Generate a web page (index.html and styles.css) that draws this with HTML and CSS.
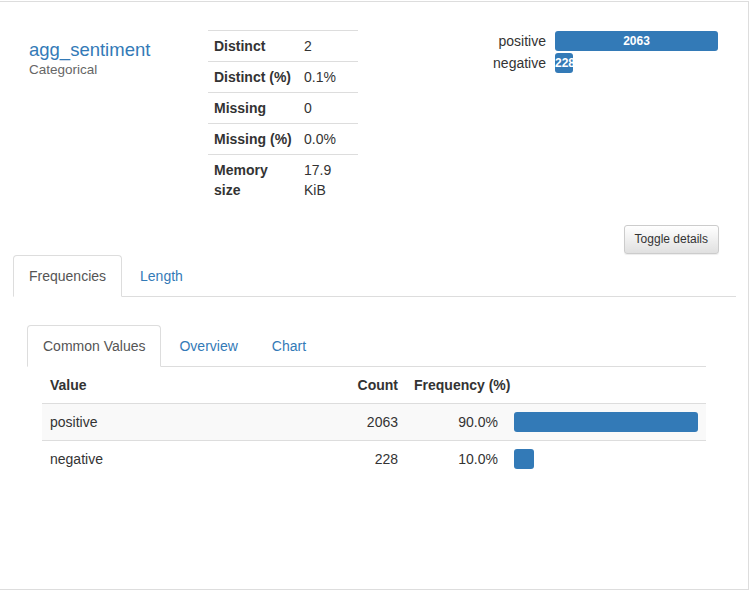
FILE: index.html
```html
<!DOCTYPE html>
<html>
<head>
<meta charset="utf-8">
<link rel="stylesheet" href="styles.css">
</head>
<body>
<div class="panel">
  <div class="overview">
    <div class="var-name">
      <p class="title">agg_sentiment</p>
      <p class="subtitle">Categorical</p>
    </div>
    <table class="stats">
      <tr><th>Distinct</th><td>2</td></tr>
      <tr><th>Distinct (%)</th><td>0.1%</td></tr>
      <tr><th>Missing</th><td>0</td></tr>
      <tr><th>Missing (%)</th><td>0.0%</td></tr>
      <tr><th>Memory<br>size</th><td>17.9<br>KiB</td></tr>
    </table>
    <div class="mini">
      <div class="mini-grid">
        <span class="mini-label">positive</span>
        <div class="mini-track"><div class="mini-bar" style="width:163px">2063</div></div>
        <span class="mini-label">negative</span>
        <div class="mini-track"><div class="mini-bar" style="width:18px">228</div></div>
      </div>
    </div>
  </div>
  <div class="actions">
    <button class="btn">Toggle details</button>
  </div>
  <ul class="tabs outer">
    <li><a class="active">Frequencies</a></li>
    <li><a>Length</a></li>
  </ul>
  <div class="tab-content">
    <ul class="tabs inner">
      <li><a class="active">Common Values</a></li>
      <li><a>Overview</a></li>
      <li><a>Chart</a></li>
    </ul>
    <table class="freq">
      <colgroup>
        <col class="c-value">
        <col class="c-count">
        <col class="c-pct">
        <col class="c-bar">
      </colgroup>
      <thead>
        <tr><th>Value</th><th class="num">Count</th><th colspan="2">Frequency (%)</th></tr>
      </thead>
      <tbody>
        <tr class="odd"><td>positive</td><td class="num">2063</td><td class="num">90.0%</td><td><div class="bar" style="width:184px"></div></td></tr>
        <tr><td>negative</td><td class="num">228</td><td class="num">10.0%</td><td><div class="bar" style="width:20px"></div></td></tr>
      </tbody>
    </table>
  </div>
</div>
</body>
</html>
```

FILE: styles.css
```css
* { box-sizing: border-box; }
html, body {
  margin: 0;
  padding: 0;
  background: #fff;
  font-family: "Liberation Sans", Arial, sans-serif;
  font-size: 14px;
  line-height: 20px;
  color: #333;
}
.panel {
  margin: 1px 0 0 -1px;
  width: 750px;
  height: 589px;
  border: 1px solid #ddd;
  overflow: hidden;
}
.overview {
  display: flex;
  align-items: flex-start;
  padding: 28px 30px 0 29px;
}
.var-name {
  width: 179px;
  padding-top: 10px;
}
.title {
  margin: 0;
  font-size: 18.5px;
  line-height: 20px;
  color: #337ab7;
}
.subtitle {
  margin: 0;
  font-size: 13.5px;
  line-height: 20px;
  color: #666;
}
.stats {
  width: 150px;
  border-collapse: collapse;
  table-layout: fixed;
}
.stats th, .stats td {
  border-top: 1px solid #ddd;
  padding: 5px 6px;
  text-align: left;
  vertical-align: top;
  line-height: 20px;
}
.stats th {
  width: 90px;
  font-weight: bold;
}
.mini {
  flex: 1;
  display: flex;
  justify-content: flex-end;
  padding-top: 1px;
}
.mini-grid {
  display: grid;
  grid-template-columns: auto 163px;
  column-gap: 9px;
  row-gap: 2px;
}
.mini-label {
  text-align: right;
  line-height: 20px;
}
.mini-track {
  height: 20px;
}
.mini-bar {
  height: 20px;
  background: #337ab7;
  border-radius: 3px;
  color: #fff;
  font-size: 12px;
  font-weight: bold;
  line-height: 20px;
  text-align: center;
  overflow: hidden;
  white-space: nowrap;
}
.actions {
  display: flex;
  justify-content: flex-end;
  padding: 0 29px;
  margin-top: 20px;
}
.btn {
  font-family: "Liberation Sans", Arial, sans-serif;
  font-size: 12px;
  line-height: 17px;
  padding: 5px 10px;
  color: #333;
  border: 1px solid #ccc;
  border-radius: 3px;
  background: linear-gradient(#fff, #e0e0e0);
  box-shadow: inset 0 1px 0 rgba(255,255,255,.15), 0 1px 1px rgba(0,0,0,.075);
}
.tabs {
  display: flex;
  list-style: none;
  margin: 1px 12px 0 13px;
  padding: 0;
  border-bottom: 1px solid #ddd;
}
.tabs li {
  margin-bottom: -1px;
}
.tabs a {
  display: block;
  padding: 10px 15px;
  line-height: 20px;
  margin-right: 2px;
  border: 1px solid transparent;
  border-radius: 4px 4px 0 0;
  color: #337ab7;
}
.tabs a.active {
  color: #555;
  background: #fff;
  border-color: #ddd #ddd transparent;
}
.tab-content {
  padding: 28px 0 0 27px;
}
.tabs.inner {
  margin: 0;
  width: 679px;
}
.freq {
  margin-left: 15px;
  width: 664px;
  border-collapse: collapse;
  table-layout: fixed;
}
.c-value { width: 300px; }
.c-count { width: 64px; }
.c-pct { width: 100px; }
.c-bar { width: 200px; }
.freq th, .freq td {
  padding: 8px;
  line-height: 20px;
  text-align: left;
  vertical-align: middle;
}
.freq th {
  font-weight: bold;
  border-bottom: 1px solid #ddd;
}
.freq tbody tr + tr td {
  border-top: 1px solid #ddd;
}
.freq .num { text-align: right; }
.freq tr.odd td { background: #f9f9f9; }
.bar {
  height: 20px;
  background: #337ab7;
  border-radius: 3px;
}
```
